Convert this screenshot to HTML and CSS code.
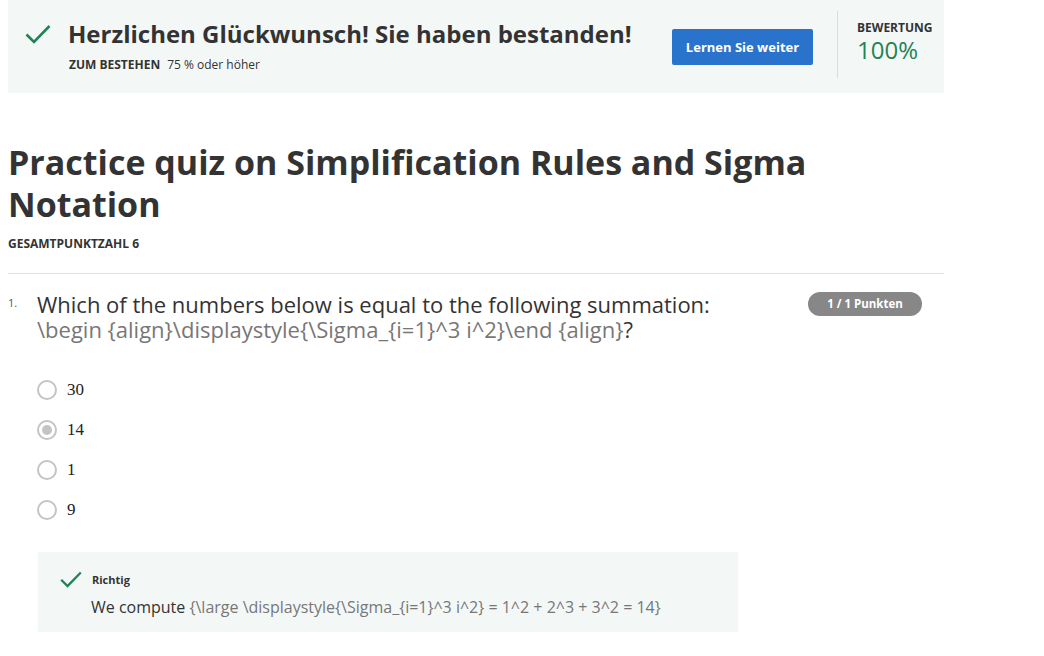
FILE: index.html
```html
<!DOCTYPE html>
<html lang="de">
<head>
<meta charset="utf-8">
<title>Practice quiz</title>
<link rel="stylesheet" href="styles.css">
</head>
<body>
<div class="page">
  <header class="banner">
    <div class="banner-main">
      <div class="banner-title">
        <svg class="check big" viewBox="0 0 26 20" width="26" height="20"><path d="M1.5 10.5 L9 18 L24.5 2" fill="none" stroke="#1f8354" stroke-width="2.6"/></svg>
        <h2>Herzlichen Glückwunsch! Sie haben bestanden!</h2>
      </div>
      <div class="pass"><strong>ZUM BESTEHEN</strong><span>75 % oder höher</span></div>
    </div>
    <button class="btn">Lernen Sie weiter</button>
    <div class="score">
      <div class="score-label">BEWERTUNG</div>
      <div class="score-value">100%</div>
    </div>
  </header>

  <h1 class="title">Practice quiz on Simplification Rules and Sigma Notation</h1>
  <div class="total">GESAMTPUNKTZAHL 6</div>
  <hr class="rule">

  <section class="question">
    <div class="q-head">
      <span class="q-num">1.</span>
      <div class="q-text">Which of the numbers below is equal to the following summation:<br><span class="latex">\begin {align}\displaystyle{\Sigma_{i=1}^3 i^2}\end {align}</span>?</div>
      <span class="badge">1 / 1 Punkten</span>
    </div>
    <ul class="options">
      <li><span class="radio"></span><span class="opt">30</span></li>
      <li><span class="radio checked"></span><span class="opt">14</span></li>
      <li><span class="radio"></span><span class="opt">1</span></li>
      <li><span class="radio"></span><span class="opt">9</span></li>
    </ul>
    <div class="feedback">
      <div class="fb-head">
        <svg class="check small" viewBox="0 0 22 17" width="22" height="17"><path d="M1.2 8.8 L7.5 15 L20.8 1.5" fill="none" stroke="#1f8354" stroke-width="2.3"/></svg>
        <span class="fb-label">Richtig</span>
      </div>
      <div class="fb-text">We compute <span class="latex">{\large \displaystyle{\Sigma_{i=1}^3 i^2} = 1^2 + 2^3 + 3^2 = 14}</span></div>
    </div>
  </section>
</div>
</body>
</html>
```

FILE: styles.css
```css
* { box-sizing: border-box; }
body {
  margin: 0;
  background: #fff;
  font-family: "Open Sans", "Noto Sans", sans-serif;
  color: #333;
}
.page {
  width: 936px;
  margin-left: 8px;
}
.banner {
  display: flex;
  align-items: flex-start;
  background: #f3f8f7;
  height: 93px;
  padding: 11px 0 0 17px;
}
.banner-main {
  flex: 1;
}
.banner-title {
  display: flex;
  align-items: center;
  gap: 17px;
  margin-top: 8px;
}
.banner-title h2 {
  margin: 0;
  font-size: 24px;
  font-weight: 700;
  line-height: 30px;
  color: #333;
}
.pass {
  margin: 8px 0 0 44px;
  font-size: 12px;
  line-height: 16px;
  color: #333;
}
.pass strong {
  font-weight: 700;
  margin-right: 7px;
}
.btn {
  margin-top: 18px;
  width: 141px;
  height: 36px;
  border: 0;
  border-radius: 2px;
  background: #2a73cc;
  color: #fff;
  font-family: inherit;
  font-weight: 700;
  font-size: 13px;
}
.score {
  margin-left: 24px;
  width: 107px;
  height: 67px;
  border-left: 1px solid #d9dedd;
  padding: 9px 0 0 19px;
}
.score-label {
  font-size: 12px;
  font-weight: 700;
  line-height: 16px;
  color: #333;
}
.score-value {
  font-size: 24px;
  line-height: 28px;
  color: #1f8354;
}
.title {
  margin: 48px 0 0;
  font-size: 34px;
  line-height: 42px;
  font-weight: 700;
  color: #333;
  width: 830px;
}
.total {
  margin-top: 11px;
  font-size: 12px;
  font-weight: 700;
  line-height: 16px;
}
.rule {
  margin: 21px 0 0;
  border: 0;
  border-top: 1px solid #e1e1e1;
}
.question {
  padding-top: 18px;
}
.q-head {
  display: flex;
  align-items: flex-start;
}
.q-num {
  width: 29px;
  padding-top: 2px;
  font-size: 11px;
  line-height: 18px;
  color: #555;
}
.q-text {
  flex: 1;
  font-size: 22px;
  line-height: 25px;
  color: #333;
}
.latex {
  color: #777;
}
.badge {
  margin: 0 22px 0 0;
  width: 114px;
  height: 24px;
  border-radius: 12px;
  background: #878787;
  color: #fff;
  font-size: 11.5px;
  font-weight: 700;
  line-height: 24px;
  text-align: center;
}
.options {
  list-style: none;
  margin: 38px 0 0 29px;
  padding: 0;
  display: flex;
  flex-direction: column;
  gap: 20px;
}
.options li {
  display: flex;
  align-items: center;
  gap: 10px;
  height: 20px;
}
.radio {
  width: 20px;
  height: 20px;
  border-radius: 50%;
  border: 2px solid #c4c4c4;
  background: #fff;
  display: flex;
  align-items: center;
  justify-content: center;
}
.radio.checked::after {
  content: "";
  width: 10px;
  height: 10px;
  border-radius: 50%;
  background: #c4c4c4;
}
.opt {
  font-family: "Liberation Serif", "DejaVu Serif", serif;
  font-size: 17px;
  color: #222;
}
.feedback {
  margin: 32px 0 0 30px;
  width: 700px;
  height: 80px;
  background: #f3f8f7;
  padding: 19px 0 0 22px;
}
.fb-head {
  display: flex;
  align-items: center;
  gap: 10px;
}
.fb-label {
  font-size: 11px;
  font-weight: 700;
  color: #333;
}
.fb-text {
  margin: 8px 0 0 31px;
  font-size: 16px;
  line-height: 22px;
  color: #333;
}
```
